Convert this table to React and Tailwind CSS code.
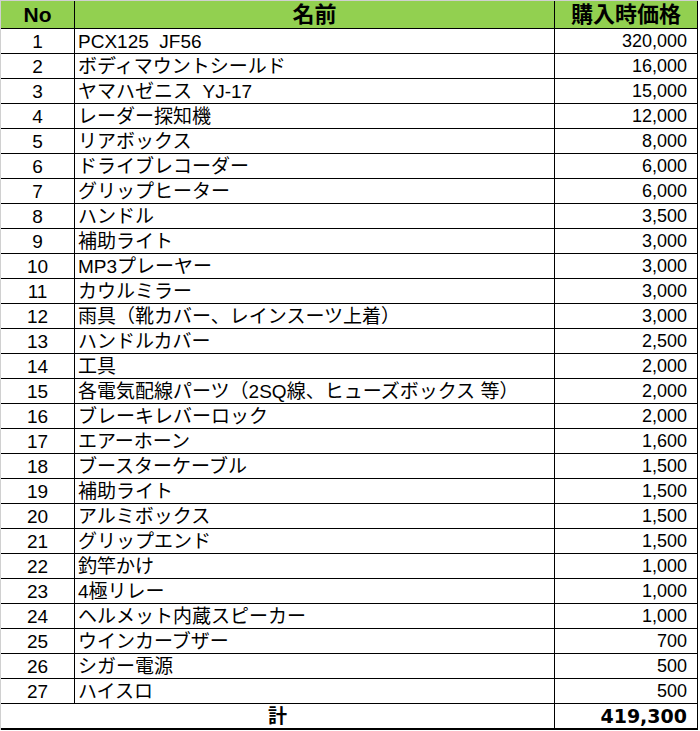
const items = [
  ['1', 'PCX125  JF56', '320,000'],
  ['2', 'ボディマウントシールド', '16,000'],
  ['3', 'ヤマハゼニス  YJ-17', '15,000'],
  ['4', 'レーダー探知機', '12,000'],
  ['5', 'リアボックス', '8,000'],
  ['6', 'ドライブレコーダー', '6,000'],
  ['7', 'グリップヒーター', '6,000'],
  ['8', 'ハンドル', '3,500'],
  ['9', '補助ライト', '3,000'],
  ['10', 'MP3プレーヤー', '3,000'],
  ['11', 'カウルミラー', '3,000'],
  ['12', '雨具（靴カバー、レインスーツ上着）', '3,000'],
  ['13', 'ハンドルカバー', '2,500'],
  ['14', '工具', '2,000'],
  ['15', '各電気配線パーツ（2SQ線、ヒューズボックス 等）', '2,000'],
  ['16', 'ブレーキレバーロック', '2,000'],
  ['17', 'エアーホーン', '1,600'],
  ['18', 'ブースターケーブル', '1,500'],
  ['19', '補助ライト', '1,500'],
  ['20', 'アルミボックス', '1,500'],
  ['21', 'グリップエンド', '1,500'],
  ['22', '釣竿かけ', '1,000'],
  ['23', '4極リレー', '1,000'],
  ['24', 'ヘルメット内蔵スピーカー', '1,000'],
  ['25', 'ウインカーブザー', '700'],
  ['26', 'シガー電源', '500'],
  ['27', 'ハイスロ', '500'],
];

const jp = "font-['Liberation_Sans','Noto_Sans_CJK_JP',sans-serif]";

export default function App() {
  return (
    <div className={`w-[700px] h-[731px] bg-white text-black ${jp}`}>
      <div className="w-[698px] border-l border-t border-[#d0d0d0]">
        <div className="grid grid-cols-[74px_480px_143px]">
          {/* header */}
          <div className="h-[28px] bg-[#92d050] border-r border-b border-black flex items-center justify-center text-[21px] font-bold leading-none">
            No
          </div>
          <div className="h-[28px] bg-[#92d050] border-r border-b border-black flex items-center justify-center text-[22px] font-bold leading-none">
            名前
          </div>
          <div className="h-[28px] bg-[#92d050] border-r border-b border-black flex items-center justify-center text-[22px] font-bold leading-none">
            購入時価格
          </div>

          {items.map(([no, name, price]) => (
            <div key={no} className="contents">
              <div className="h-[25px] border-r border-b border-black flex items-end justify-center pb-[2px] text-[19px] leading-none">
                {no}
              </div>
              <div className="h-[25px] border-r border-b border-black flex items-end pl-[3px] pb-[2px] text-[19px] leading-none whitespace-pre overflow-hidden">
                {name}
              </div>
              <div className="h-[25px] border-r border-b border-black flex items-end justify-end pr-[10px] pb-[3px] text-[18px] leading-none">
                {price}
              </div>
            </div>
          ))}

          {/* total */}
          <div className="col-span-2 h-[26px] border-r border-b-2 border-black flex items-end justify-center pb-[2px] text-[19px] font-bold leading-none">
            計
          </div>
          <div className="h-[26px] border-r border-b-2 border-black flex items-end justify-end pr-[10px] pb-[2px] text-[19px] font-bold leading-none font-['DejaVu_Sans',sans-serif]">
            419,300
          </div>
        </div>
      </div>
    </div>
  );
}
